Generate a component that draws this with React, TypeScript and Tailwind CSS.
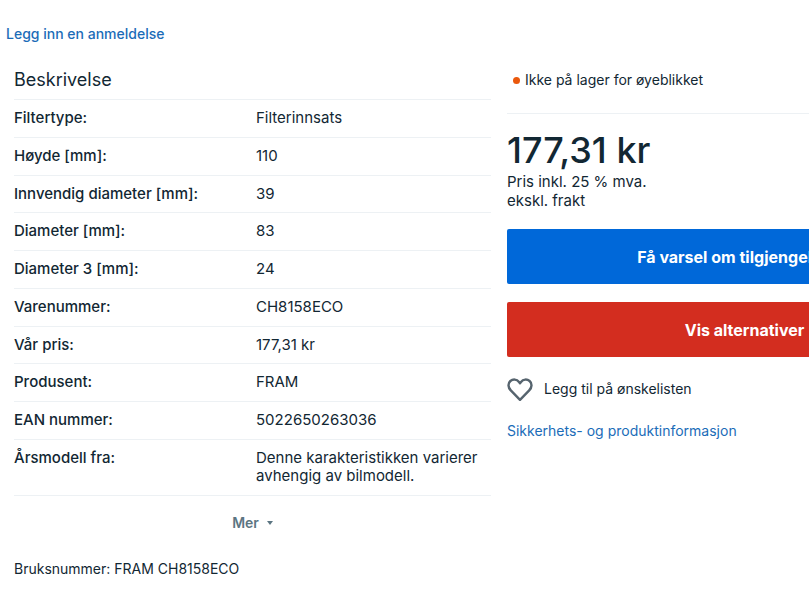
import React from "react";

const rows: [string, string][] = [
  ["Filtertype:", "Filterinnsats"],
  ["Høyde [mm]:", "110"],
  ["Innvendig diameter [mm]:", "39"],
  ["Diameter [mm]:", "83"],
  ["Diameter 3 [mm]:", "24"],
  ["Varenummer:", "CH8158ECO"],
  ["Vår pris:", "177,31 kr"],
  ["Produsent:", "FRAM"],
  ["EAN nummer:", "5022650263036"],
  ["Årsmodell fra:", "Denne karakteristikken varierer avhengig av bilmodell."],
];

function Description() {
  return (
    <section className="w-[491px] shrink-0 pt-6">
      <a href="#review" className="ml-[6px] block text-sm leading-5 font-medium text-[#1b6cb8]">
        Legg inn en anmeldelse
      </a>
      <div className="pt-6 pl-[14px]">
        <h2 className="h-[31px] text-lg leading-6 font-normal">Beskrivelse</h2>
        <table className="h-[397px] w-full table-fixed border-t border-[#edf1f4] text-[15px] leading-[18px]">
          <tbody>
            {rows.map(([label, value]) => (
              <tr key={label} className="border-b border-[#edf1f4]">
                <th scope="row" className="w-[242px] py-[9px] text-left align-top font-medium">
                  {label}
                </th>
                <td className="py-[9px] pr-2 align-top">{value}</td>
              </tr>
            ))}
          </tbody>
        </table>
        <div className="flex justify-center pt-[17px]">
          <button type="button" className="flex items-center gap-2 text-sm leading-5 font-semibold text-[#5b7582]">
            Mer
            <svg width="6" height="4" viewBox="0 0 6 4" fill="currentColor" aria-hidden="true">
              <path d="M0 0h6L3 4z" />
            </svg>
          </button>
        </div>
        <p className="pt-[26px] text-sm leading-5">Bruksnummer: FRAM CH8158ECO</p>
      </div>
    </section>
  );
}

function Purchase() {
  return (
    <aside className="w-[475px] shrink-0 pt-[70px]">
      <p className="flex items-center gap-[5px] pb-[23px] pl-[6px] text-sm leading-5">
        <span className="size-[7px] rounded-full bg-[#ea580c]" />
        Ikke på lager for øyeblikket
      </p>
      <div className="border-t border-[#edf1f4] pt-4">
        <p className="text-[36px] leading-10 font-medium">177,31 kr</p>
        <p className="pt-[2px] text-[15px] leading-[19px]">
          Pris inkl. 25 % mva.
          <br />
          ekskl. frakt
        </p>
      </div>
      <div className="flex flex-col gap-[18px] pt-[19px] text-base font-bold text-white">
        <button type="button" className="h-[55px] w-full rounded-xs bg-[#0068d9]">
          Få varsel om tilgjengelighet
        </button>
        <button type="button" className="h-[55px] w-full rounded-xs bg-[#d32d1f]">
          Vis alternativer
        </button>
      </div>
      <button type="button" className="flex items-center gap-[11px] pt-5 text-sm leading-6">
        <svg width="26" height="24" viewBox="0 0 26 24" fill="none" stroke="#56646e" strokeWidth="2.4" strokeLinejoin="round" aria-hidden="true">
          <path d="M13 22.8 3.8 13.4C.8 10.3.8 6.2 3.4 4 6 1.8 9.8 2.1 12 4.9l1 1.3 1-1.3c2.2-2.8 6-3.1 8.6-.9 2.6 2.2 2.6 6.3-.4 9.4z" />
        </svg>
        Legg til på ønskelisten
      </button>
      <a href="#safety" className="mt-5 block text-sm leading-5 text-[#1b6cb8]">
        Sikkerhets- og produktinformasjon
      </a>
    </aside>
  );
}

export default function App() {
  return (
    <main className="flex gap-4 overflow-hidden bg-white pb-3 font-['Inter','Liberation_Sans',sans-serif] text-[#122733]">
      <Description />
      <Purchase />
    </main>
  );
}
